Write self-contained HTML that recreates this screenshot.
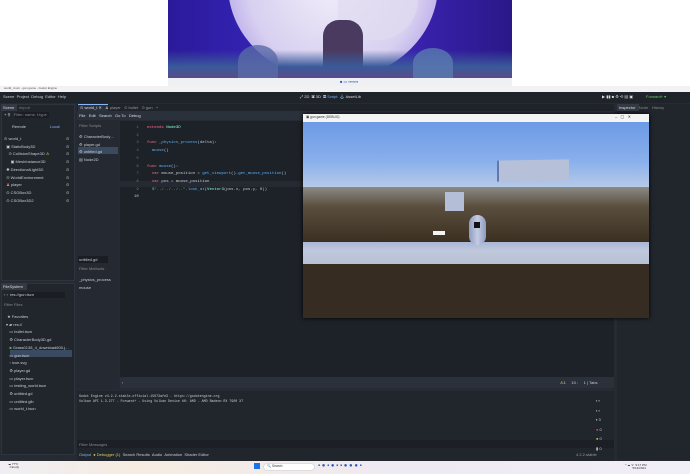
<!DOCTYPE html>
<html><head><meta charset="utf-8"><style>
*{margin:0;padding:0;box-sizing:border-box}
body{width:690px;height:474px;overflow:hidden;background:#fff;position:relative;font-family:"Liberation Sans",sans-serif;font-size:4px;color:#c8ccd4}
div{position:absolute}
.t{white-space:nowrap;line-height:1}
.m{font-family:"Liberation Mono",monospace}
</style></head><body>
<!-- wallpaper -->
<div style="left:168px;top:0;width:344px;height:78px;overflow:hidden;background:linear-gradient(90deg,#2a1a9a,#3a28c0 40%,#3a22b0 70%,#2a1888)">
 <div style="left:60px;top:-110px;width:210px;height:190px;border-radius:50%;background:radial-gradient(circle at 50% 50%,#f2eefa 0,#d8d0f0 60%,#b0a0e8 85%,#7a5ae0 100%)"></div>
 <div style="left:170px;top:-10px;width:80px;height:50px;border-radius:0 0 40px 20px;background:#e0dcef;opacity:.7"></div>
 <div style="left:155px;top:20px;width:40px;height:58px;background:#4a3a60;border-radius:16px 16px 2px 2px"></div>
 <div style="left:0;top:50px;width:344px;height:28px;background:linear-gradient(#3a4a9a00,#3a5a9a 60%,#5a4a8a)"></div>
 <div style="left:70px;top:45px;width:40px;height:33px;background:#5a6aa8;border-radius:50% 50% 0 0;opacity:.8"></div>
 <div style="left:245px;top:48px;width:40px;height:30px;background:#5a7ab0;border-radius:50% 50% 0 0;opacity:.8"></div>
</div>
<div style="left:168px;top:78px;width:344px;height:8px;background:#eef0f4"></div>
<div class="t" style="left:340px;top:80px;font-size:4px;color:#2a5ab8">■ ▭ ▪▪▪▪▪▪▪</div>
<!-- godot title -->
<div style="left:0;top:86px;width:690px;height:6px;background:#f2f2f2"></div>
<div class="t" style="left:4px;top:87px;font-size:3px;color:#555">world_t.tscn - gun game - Godot Engine</div>
<!-- editor bg -->
<div style="left:0;top:92px;width:690px;height:370px;background:#262b33"></div>
<div style="left:0;top:92px;width:690px;height:11px;background:#1f232a"></div>
<div class="t" style="left:3px;top:95px">Scene &nbsp;Project &nbsp;Debug &nbsp;Editor &nbsp;Help</div>
<div class="t" style="left:300px;top:95px;color:#ddd">⤢ 2D &nbsp;▣ 3D &nbsp;<span style="color:#8ab4f8">▤ Script</span> &nbsp;⚓ AssetLib</div>
<div class="t" style="left:602px;top:95px;color:#ddd">▶ ▮▮ ■ ⚙ ⟲ ▤ ▣</div>
<div class="t" style="left:646px;top:95px;color:#6c6">Forward+ ▾</div>
<!-- left dock -->
<div style="left:1px;top:104px;width:74px;height:177px;background:#21262d;border:1px solid #2e343d"></div>
<div style="left:1px;top:104px;width:16px;height:7px;background:#333a44"></div>
<div class="t" style="left:3px;top:106px;color:#ddd">Scene &nbsp;&nbsp;&nbsp;<span style="color:#777">Import</span></div>
<div style="left:15px;top:112px;width:34px;height:6px;background:#1a1e24"></div>
<div class="t" style="left:4px;top:113px;color:#ddd">+ ⚲ &nbsp;&nbsp;<span style="color:#888">Filter: name, t:type</span></div>
<div class="t" style="left:12px;top:125px">Remote</div><div class="t" style="left:50px;top:125px;color:#8ab4f8">Local</div>
<div class="t" style="left:4px;top:135px;line-height:7.7px">⊙ world_t<br>&nbsp;&nbsp;▣ StaticBody3D<br>&nbsp;&nbsp;&nbsp;&nbsp;⊙ CollisionShape3D <span style="color:#ee3">⚠</span><br>&nbsp;&nbsp;&nbsp;&nbsp;&nbsp;&nbsp;▣ MeshInstance3D<br>&nbsp;&nbsp;✺ DirectionalLight3D<br>&nbsp;&nbsp;⊙ WorldEnvironment<br>&nbsp;&nbsp;<span style="color:#e77">♟</span> player<br>&nbsp;&nbsp;⊙ CSGBox3D<br>&nbsp;&nbsp;⊙ CSGBox3D2</div>
<div class="t" style="left:66px;top:135px;line-height:7.7px">⊙<br>⊙<br>⊙<br>⊙<br>⊙<br>⊙<br>⊙<br>⊙<br>⊙</div>
<div style="left:1px;top:283px;width:74px;height:172px;background:#21262d;border:1px solid #2e343d"></div>
<div style="left:1px;top:283px;width:26px;height:7px;background:#333a44"></div>
<div class="t" style="left:3px;top:285px;color:#ddd">FileSystem</div>
<div style="left:13px;top:292px;width:52px;height:6px;background:#1a1e24"></div>
<div class="t" style="left:4px;top:293px">‹ › &nbsp;res://gun.tscn</div>
<div class="t" style="left:4px;top:303px;color:#888">Filter Files</div>
<div style="left:10px;top:350px;width:62px;height:7px;background:#3a4a60"></div>
<div class="t" style="left:6px;top:313px;line-height:7.7px">&nbsp;★ Favorites<br>▾ ▰ res://<br>&nbsp;&nbsp;&nbsp;▭ bullet.tscn<br>&nbsp;&nbsp;&nbsp;⚙ CharacterBody3D.gd<br>&nbsp;&nbsp;&nbsp;<span style="color:#7a3">■</span> Grass0138_4_download600.j…<br>&nbsp;&nbsp;&nbsp;▭ gun.tscn<br>&nbsp;&nbsp;&nbsp;▫ icon.svg<br>&nbsp;&nbsp;&nbsp;⚙ player.gd<br>&nbsp;&nbsp;&nbsp;▭ player.tscn<br>&nbsp;&nbsp;&nbsp;▭ testing_world.tscn<br>&nbsp;&nbsp;&nbsp;⚙ untitled.gd<br>&nbsp;&nbsp;&nbsp;▭ untitled.glb<br>&nbsp;&nbsp;&nbsp;▭ world_t.tscn</div>
<!-- center -->
<div style="left:77px;top:104px;width:537px;height:7px;background:#1f232a"></div>
<div style="left:78px;top:104px;width:30px;height:7px;background:#2d333c;border-top:1px solid #8ab4f8"></div>
<div class="t" style="left:80px;top:106px;color:#ddd">⊙ world_t ✕ &nbsp;&nbsp;<span style="color:#999">♟ player &nbsp;&nbsp;⊙ bullet &nbsp;&nbsp;⊙ gun &nbsp;&nbsp;+</span></div>
<div style="left:77px;top:111px;width:537px;height:9px;background:#2b313a"></div>
<div class="t" style="left:79px;top:114px;color:#ddd">File &nbsp;&nbsp;Edit &nbsp;&nbsp;Search &nbsp;&nbsp;Go To &nbsp;&nbsp;Debug</div>
<div style="left:77px;top:121px;width:41px;height:268px;background:#252a32"></div>
<div class="t" style="left:79px;top:124px;color:#888">Filter Scripts</div>
<div style="left:78px;top:147px;width:40px;height:7px;background:#3a4a60"></div>
<div class="t" style="left:79px;top:133px;line-height:7.7px">⚙ CharacterBody…<br>⚙ player.gd<br>⚙ untitled.gd<br>▤ Node2D</div>
<div style="left:78px;top:256px;width:30px;height:7px;background:#1a1e24"></div>
<div class="t" style="left:79px;top:258px">untitled.gd</div>
<div class="t" style="left:79px;top:267px;color:#888">Filter Methods</div>
<div class="t" style="left:79px;top:276px;line-height:7.7px">_physics_process<br>mouse</div>
<div style="left:120px;top:121px;width:494px;height:257px;background:#1d2128"></div>
<div style="left:120px;top:181px;width:494px;height:6px;background:#252a32"></div>
<div class="m t" style="left:134px;top:125px;line-height:7.7px;color:#6a7280;font-size:4px">&nbsp;1<br>&nbsp;2<br>&nbsp;3<br>&nbsp;4<br>&nbsp;5<br>&nbsp;6<br>&nbsp;7<br>&nbsp;8<br>&nbsp;9<br><span style="color:#ccc">10</span></div>
<div class="m t" style="left:147px;top:125px;line-height:7.7px;font-size:4px"><span style="color:#ff7085">extends</span> <span style="color:#8fffdb">Node3D</span><br><br><span style="color:#ff7085">func</span> <span style="color:#57b3ff">_physics_process</span>(delta):<br>&nbsp;&nbsp;<span style="color:#57b3ff">mouse</span>()<br><br><span style="color:#ff7085">func</span> <span style="color:#57b3ff">mouse</span>():<br>&nbsp;&nbsp;<span style="color:#ff7085">var</span> mouse_position = <span style="color:#57b3ff">get_viewport</span>().<span style="color:#57b3ff">get_mouse_position</span>()<br>&nbsp;&nbsp;<span style="color:#ff7085">var</span> pos = mouse_position<br>&nbsp;&nbsp;<span style="color:#63c259">$"../../../.."</span>.<span style="color:#57b3ff">look_at</span>(<span style="color:#8fffdb">Vector3</span>(pos.x, pos.y, 0))</div>
<div style="left:120px;top:377px;width:494px;height:11px;background:#2b313a"></div>
<div class="t" style="left:122px;top:381px">‹</div>
<div class="t" style="left:560px;top:381px"><span style="color:#ee3">⚠</span>1 &nbsp;&nbsp;&nbsp;&nbsp;10 : &nbsp;&nbsp;&nbsp;&nbsp;1 | Tabs</div>
<!-- bottom panel -->
<div style="left:77px;top:391px;width:537px;height:70px;background:#21262d"></div>
<div class="m t" style="left:79px;top:394px;line-height:4.6px;font-size:3.3px">Godot Engine v4.2.2.stable.official.15073afe3 - https://godotengine.org<br>Vulkan API 1.3.277 - Forward+ - Using Vulkan Device #0: AMD - AMD Radeon RX 7900 XT</div>
<div style="left:77px;top:440px;width:537px;height:8px;background:#1c2026"></div>
<div class="t" style="left:79px;top:443px;color:#888">Filter Messages</div>
<div class="t" style="left:79px;top:453px"><span style="color:#8ab4f8">Output</span> &nbsp;<span style="color:#dc6">● Debugger (1)</span> &nbsp;Search Results &nbsp;Audio &nbsp;Animation &nbsp;Shader Editor</div>
<div class="t" style="left:596px;top:396px;line-height:9.5px">▪ ▪<br>▪ ▪<br><span style="color:#fff">▪</span> 3<br><span style="color:#e44">●</span> 0<br><span style="color:#ec3">●</span> 0<br>▮ 0</div>
<div class="t" style="left:576px;top:453px;color:#999">4.2.2.stable</div>
<!-- right dock -->
<div style="left:617px;top:104px;width:73px;height:356px;background:#21262d"></div>
<div style="left:617px;top:104px;width:22px;height:7px;background:#333a44"></div>
<div class="t" style="left:619px;top:106px;color:#ddd">Inspector &nbsp;&nbsp;<span style="color:#888">Node &nbsp;&nbsp;History</span></div>
<!-- game window -->
<div style="left:303px;top:114px;width:346px;height:204px;background:#362c21;box-shadow:0 0 4px #000"></div>
<div style="left:303px;top:114px;width:346px;height:8px;background:#f4f4f4"></div>
<div class="t" style="left:306px;top:116px;font-size:3.3px;color:#333">▣ gun game (DEBUG)</div>
<div class="t" style="left:615px;top:115px;font-size:4px;color:#333">–&nbsp;&nbsp;&nbsp;▢&nbsp;&nbsp;&nbsp;✕</div>
<div style="left:303px;top:122px;width:346px;height:66px;background:linear-gradient(#6c9ae6,#8ab0ec 60%,#b8cae6)"></div>
<div style="left:303px;top:187px;width:346px;height:56px;background:linear-gradient(#8a8a86,#5a4e3e 35%,#3a2e20)"></div>
<div style="left:303px;top:242px;width:346px;height:22px;background:linear-gradient(#a8b8d8,#c0c8dc 40%,#b8c0d6)"></div>
<div style="left:303px;top:264px;width:346px;height:54px;background:#362c21"></div>
<div style="left:497px;top:160px;width:72px;height:21px;background:#b6c0d8;border-left:2px solid #6478b0;transform:skewY(-1deg)"></div>
<div style="left:445px;top:192px;width:19px;height:19px;background:#b4bed6"></div>
<div style="left:469px;top:215px;width:17px;height:30px;background:linear-gradient(90deg,#8e9ac0,#c4cce4,#8e9ac0);border-radius:9px"></div>
<div style="left:474px;top:222px;width:6px;height:6px;background:#111"></div>
<div style="left:433px;top:231px;width:12px;height:4px;background:#f4f4f4"></div>
<!-- taskbar -->
<div style="left:0;top:461px;width:690px;height:13px;background:linear-gradient(90deg,#f0eef4,#f6ece0 20%,#eeeaf4 60%,#f0eef6)"></div>
<div class="t" style="left:8px;top:463px;font-size:3px;color:#333">☁ 77°F<br>&nbsp;&nbsp;Cloudy</div>
<div style="left:254px;top:463px;width:6px;height:6px;background:#1a73e8"></div>
<div style="left:263px;top:463px;width:52px;height:8px;background:#fff;border-radius:4px;border:1px solid #ddd"></div>
<div class="t" style="left:267px;top:465px;font-size:3.3px;color:#333">🔍 Search</div>
<div class="t" style="left:318px;top:463px;font-size:6px;color:#2a5ab8">▪ ● ▪ ● ▪ ▪ ● ● ● ▪</div>
<div class="t" style="left:625px;top:464px;font-size:3px;color:#333">^ ☁ ᯤ &nbsp;5:17 PM<br>&nbsp;&nbsp;&nbsp;&nbsp;&nbsp;&nbsp;&nbsp;&nbsp;&nbsp;5/13/2024</div>
</body></html>
